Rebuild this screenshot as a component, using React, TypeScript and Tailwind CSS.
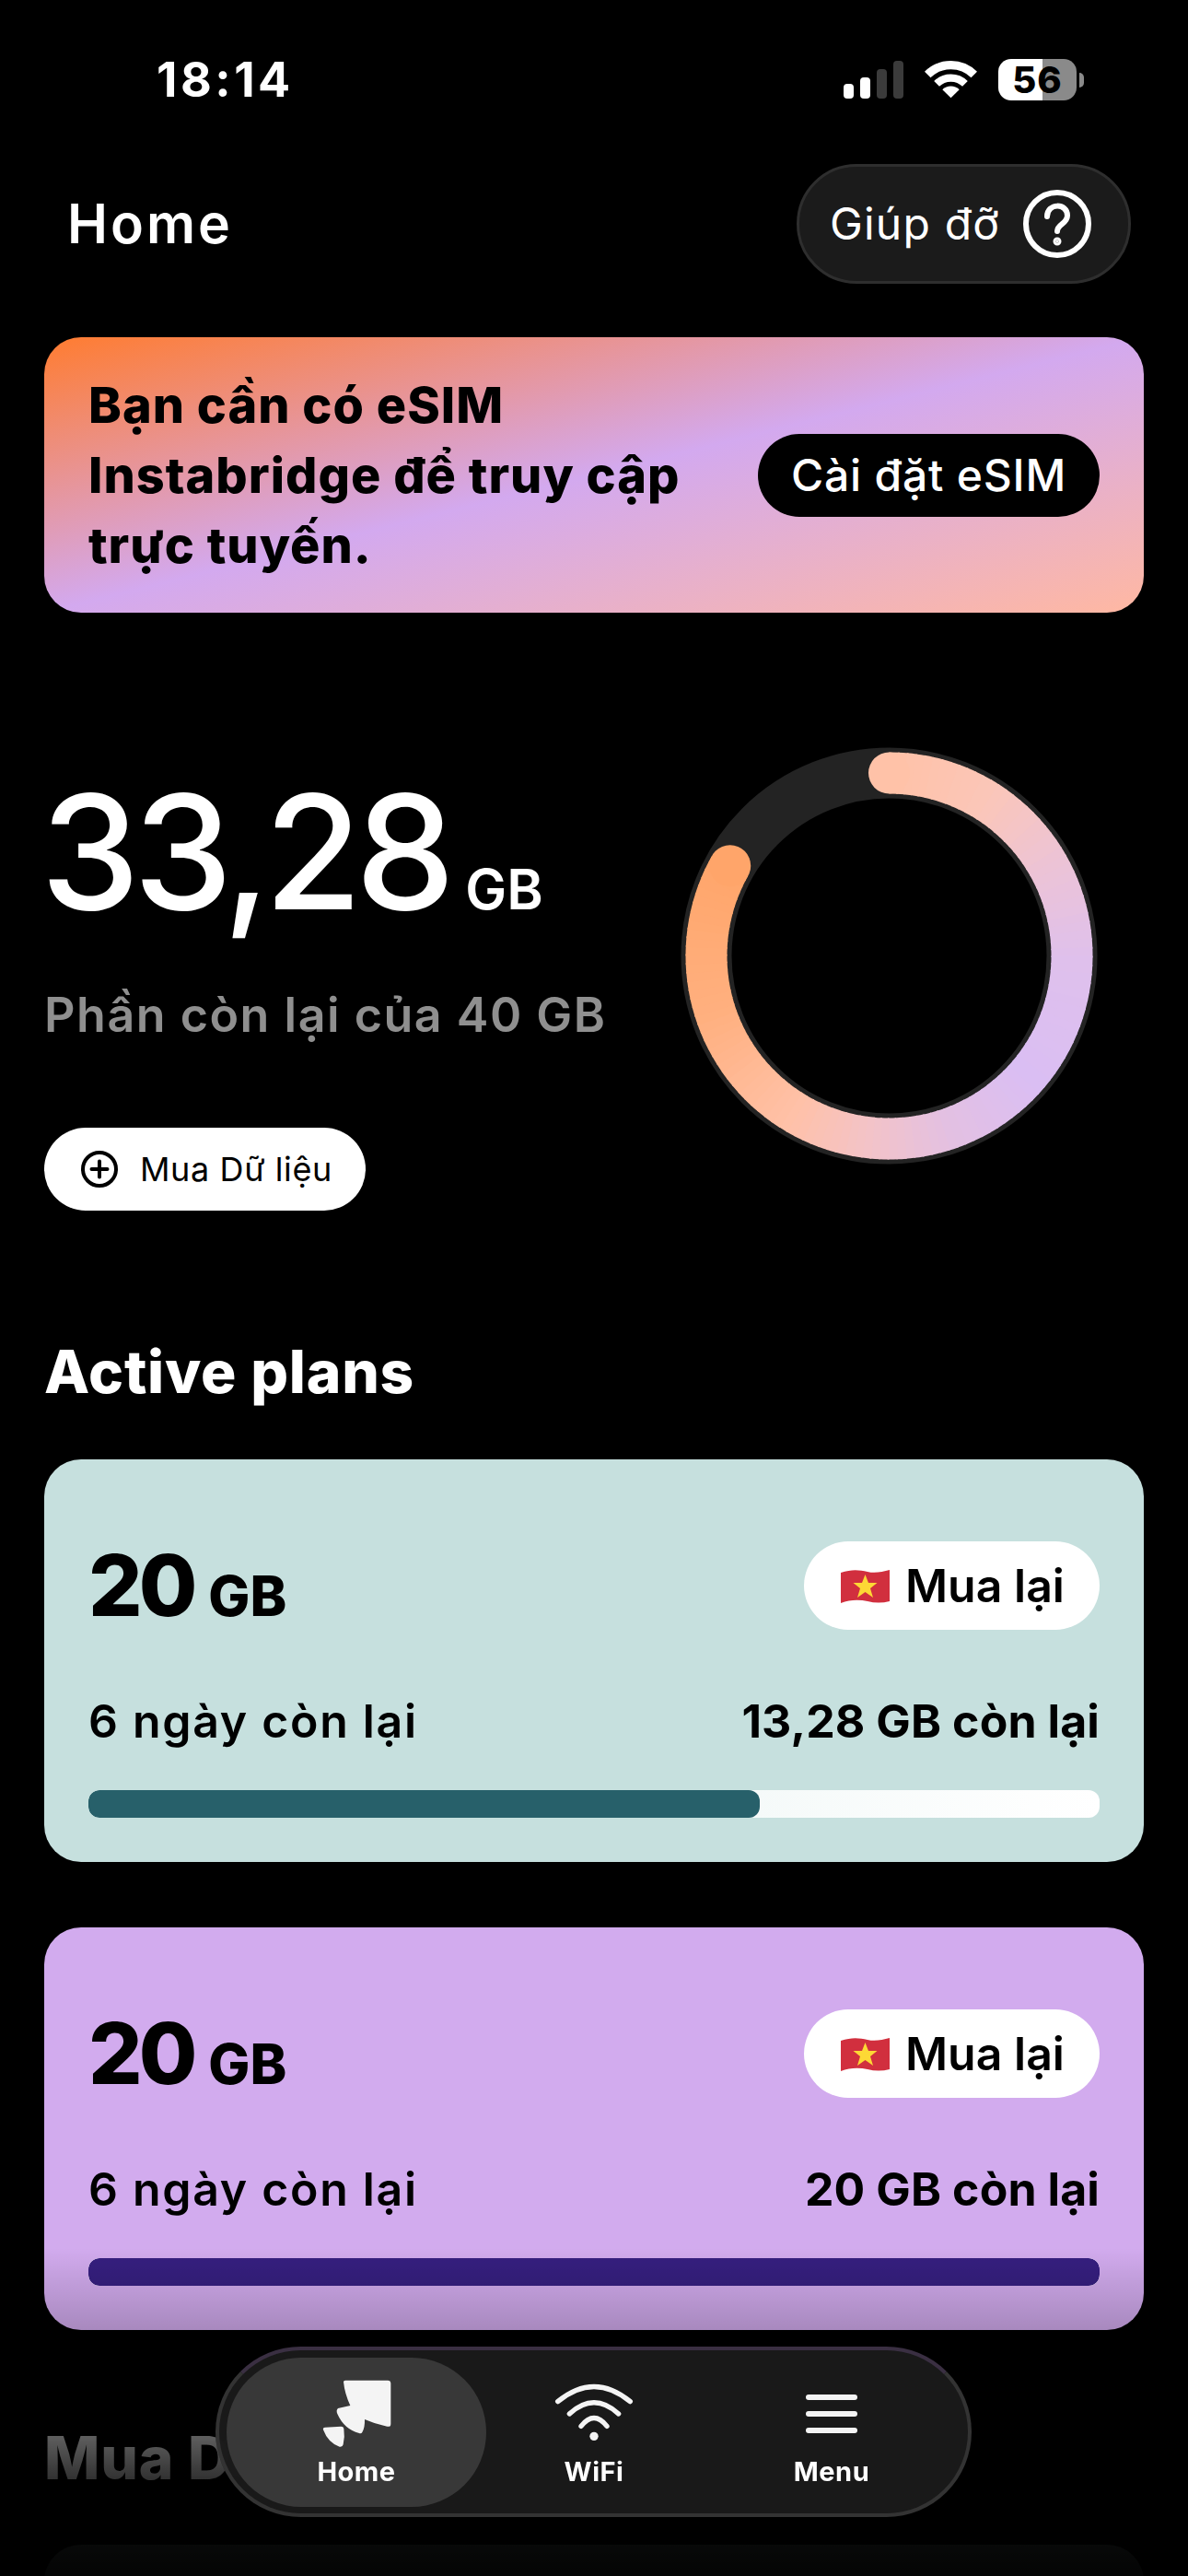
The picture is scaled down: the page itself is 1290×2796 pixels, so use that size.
const GAUGE_STOPS: [number, number[]][] = [
  [0, [255, 194, 168]],
  [30, [251, 198, 184]],
  [60, [236, 195, 214]],
  [90, [223, 192, 236]],
  [130, [218, 190, 243]],
  [160, [227, 192, 226]],
  [185, [243, 195, 200]],
  [210, [255, 193, 168]],
  [250, [255, 176, 127]],
  [300, [255, 165, 106]],
]

function gaugeColor(angle: number) {
  for (let i = 1; i < GAUGE_STOPS.length; i++) {
    const [a0, c0] = GAUGE_STOPS[i - 1]
    const [a1, c1] = GAUGE_STOPS[i]
    if (angle <= a1) {
      const t = (angle - a0) / (a1 - a0)
      const c = c0.map((v, k) => Math.round(v + (c1[k] - v) * t))
      return `rgb(${c[0]},${c[1]},${c[2]})`
    }
  }
  return 'rgb(255,165,106)'
}

function point(angle: number, r = 198.5) {
  const rad = (angle * Math.PI) / 180
  return [226.5 + r * Math.sin(rad), 226.5 - r * Math.cos(rad)]
}

function Gauge() {
  const end = 299.5
  const segments = []
  for (let a = 0; a < end; a += 2.5) {
    const [x0, y0] = point(a)
    const [x1, y1] = point(Math.min(a + 3, end))
    segments.push(
      <path
        key={a}
        d={`M${x0} ${y0} A198.5 198.5 0 0 1 ${x1} ${y1}`}
        fill="none"
        stroke={gaugeColor(a)}
        strokeWidth="45"
      />,
    )
  }
  const [sx, sy] = point(0)
  const [ex, ey] = point(end)
  return (
    <svg width="453" height="453" viewBox="0 0 453 453" className="shrink-0">
      <circle cx="226.5" cy="226.5" r="198.5" fill="none" stroke="#232323" strokeWidth="55" />
      {segments}
      <circle cx={sx} cy={sy} r="22.5" fill={gaugeColor(0)} />
      <circle cx={ex} cy={ey} r="22.5" fill={gaugeColor(end)} />
    </svg>
  )
}

function StatusBar() {
  return (
    <div className="pt-[64px] pl-[170px] pr-[113px] flex items-center justify-between h-[109px]">
      <span className="text-[52px] leading-[45px] font-bold text-white tracking-[3.5px]">18:14</span>
      <div className="flex items-center gap-[23px]">
        <svg width="65" height="41" viewBox="0 0 65 41">
          <rect x="0" y="25" width="11" height="16" rx="4" fill="#fff" />
          <rect x="18" y="18" width="11" height="23" rx="4" fill="#fff" />
          <rect x="36" y="9" width="11" height="32" rx="4" fill="#3b3b3b" />
          <rect x="54" y="0" width="11" height="41" rx="4" fill="#3b3b3b" />
        </svg>
        <svg width="57" height="41" viewBox="-86 -123 172 125">
          <path d="M-77 -77 A109 109 0 0 1 77 -77" fill="none" stroke="#fff" strokeWidth="28" />
          <path d="M-47 -47 A67 67 0 0 1 47 -47" fill="none" stroke="#fff" strokeWidth="25" />
          <path d="M0 0 L-28 -28 A40 40 0 0 1 28 -28 Z" fill="#fff" />
        </svg>
        <div className="flex items-center gap-[3px]">
          <div className="w-[85px] h-[45px] rounded-[14px] bg-[linear-gradient(to_right,#fff_56%,#8a8a8a_56%)] flex items-center justify-center text-black text-[40px] font-extrabold tracking-[1px]">
            56
          </div>
          <div className="w-[5px] h-[16px] rounded-r-full bg-[#8a8a8a]" />
        </div>
      </div>
    </div>
  )
}

function Header() {
  return (
    <div className="mt-[69px] pl-[73px] pr-[62px] flex items-center justify-between">
      <span className="text-[59px] font-semibold text-white tracking-[3px]">Home</span>
      <button className="w-[363px] h-[130px] rounded-full bg-[#1b1b1b] border-[3px] border-[#2e2e2e] flex items-center pl-[33px] gap-[25px]">
        <span className="text-[48px] text-white tracking-[1.2px]">Giúp đỡ</span>
        <svg width="74" height="74" viewBox="0 0 74 74" fill="none" stroke="#fff" strokeWidth="6" strokeLinecap="round">
          <circle cx="37" cy="37" r="34" />
          <path d="M26 29 C26 14 48 14 48 28 C48 37 37 37 37 45" />
          <circle cx="37" cy="56" r="1.5" fill="#fff" />
        </svg>
      </button>
    </div>
  )
}

function Banner() {
  return (
    <div className="mt-[58px] mx-[48px] h-[299px] rounded-[40px] bg-[linear-gradient(to_bottom_right,#ff7c30_0%,#d3a9ef_50%,#ffb8a2_100%)] flex items-center justify-between pl-[48px] pr-[48px]">
      <p className="w-[680px] text-[54px] leading-[76px] font-extrabold text-black tracking-[1px]">
        Bạn cần có eSIM
        <br />
        Instabridge để truy cập
        <br />
        trực tuyến.
      </p>
      <button className="w-[371px] h-[90px] rounded-full bg-black text-white text-[48px] font-medium tracking-[0.8px] flex items-center justify-center">
        Cài đặt eSIM
      </button>
    </div>
  )
}

function Hero() {
  return (
    <div className="mt-[146px] pl-[48px] flex items-start">
      <div className="w-[691px] pt-[27px]">
        <div className="flex items-baseline text-white -ml-[4px]">
          <span className="text-[172px] leading-[172px] font-medium tracking-[-7px]">33,28</span>
          <span className="ml-[18px] text-[60px] leading-[60px] font-semibold">GB</span>
        </div>
        <p className="mt-[61px] text-[52px] leading-[62px] font-semibold text-[#8f8f8f] tracking-[1.5px] whitespace-nowrap">
          Phần còn lại của 40 GB
        </p>
        <button className="mt-[91px] w-[349px] h-[90px] rounded-full bg-white flex items-center pl-[40px] gap-[24px] text-black">
          <svg width="40" height="40" viewBox="0 0 40 40" fill="none" stroke="#000" strokeWidth="4" className="shrink-0">
            <circle cx="20" cy="20" r="18" />
            <path d="M20 11.5V28.5M11.5 20H28.5" strokeLinecap="round" />
          </svg>
          <span className="text-[36px] tracking-[0.6px] whitespace-nowrap">Mua Dữ liệu</span>
        </button>
      </div>
      <Gauge />
    </div>
  )
}

function VietnamFlag() {
  return (
    <svg width="53" height="37" viewBox="0 0 53 37">
      <path d="M0 4 C12 0 20 1 29 3 C37 5 45 3 53 1 V35 C45 37 37 37 29 35 C20 33 10 33 0 37 Z" fill="#d12f3e" />
      <path d="M26.5 6 L30 15 H39.5 L32 21 L35 31 L26.5 25 L18 31 L21 21 L13.5 15 H23 Z" fill="#fdd835" />
    </svg>
  )
}

interface PlanCardProps {
  left: string
  bg: string
  track: string
  fill: string
  percent: number
}

function PlanCard({ left, bg, track, fill, percent }: PlanCardProps) {
  return (
    <div className={`mx-[48px] h-[437px] rounded-[40px] pt-[89px] px-[48px] text-black ${bg}`}>
      <div className="flex items-center justify-between h-[96px]">
        <div className="flex items-baseline font-extrabold">
          <span className="text-[92px] leading-[96px] tracking-[-4px]">20</span>
          <span className="ml-[16px] text-[60px] leading-[60px]">GB</span>
        </div>
        <button className="w-[321px] h-[96px] rounded-full bg-white flex items-center pl-[40px] gap-[17px]">
          <VietnamFlag />
          <span className="text-[50px] font-semibold whitespace-nowrap">Mua lại</span>
        </button>
      </div>
      <div className="mt-[69px] flex items-center justify-between text-[50px] leading-[60px]">
        <span className="font-semibold tracking-[1.7px]">6 ngày còn lại</span>
        <span className="font-bold tracking-[0.1px]">{left}</span>
      </div>
      <div className={`mt-[45px] h-[30px] rounded-[12px] overflow-hidden ${track}`}>
        <div className={`h-full rounded-[12px] ${fill}`} style={{ width: `${percent}%` }} />
      </div>
    </div>
  )
}

function BottomNav() {
  return (
    <div className="absolute left-[234px] top-[2547px] w-[821px] h-[185px] rounded-full bg-[#1a1a1a]/95 backdrop-blur-md border-[4px] border-[#333] border-t-[#3a2f42] z-20">
      <div className="absolute left-[8px] top-[8px] w-[282px] h-[162px] rounded-full bg-[#3c3c3c]/90" />
      <div className="relative ml-[20px] mt-[29px] grid grid-cols-[258px_258px_258px] text-white text-[29px] leading-[36px] font-bold">
        <div className="flex flex-col items-center">
          <svg width="80" height="80" viewBox="350 120 240 240">
            <path
              d="M428 136 Q428 131 434 131 H572 Q582 131 582 141 V272 Q582 284 570 281 Q530 273 497 258 Q498 285 489 300 Q486 305 479 303 Q430 290 408 240 Q403 228 410 222 L450 213 Q432 175 428 136 Z"
              fill="#f4f4f4"
            />
            <path
              d="M362 292 Q360 284 368 284 L420 281 Q428 281 429 288 Q433 315 427 340 Q425 349 415 347 Q378 335 362 292 Z"
              fill="#f4f4f4"
            />
          </svg>
          <span className="mt-[5px] tracking-[0.5px]">Home</span>
        </div>
        <div className="flex flex-col items-center">
          <svg width="90" height="80" viewBox="1110 125 270 240" fill="none" stroke="#f4f4f4" strokeWidth="16" strokeLinecap="round">
            <path d="M1127 205 Q1245 108 1363 205" />
            <path d="M1165 245 Q1245 172 1325 245" />
            <path d="M1203 285 Q1245 232 1287 285" />
            <circle cx="1245" cy="318" r="14" fill="#f4f4f4" stroke="none" />
          </svg>
          <span className="mt-[5px] tracking-[0.5px]">WiFi</span>
        </div>
        <div className="flex flex-col items-center">
          <div className="h-[80px] flex flex-col justify-center gap-[12px]">
            <div className="w-[56px] h-[6px] rounded-full bg-[#f4f4f4]" />
            <div className="w-[56px] h-[6px] rounded-full bg-[#f4f4f4]" />
            <div className="w-[56px] h-[6px] rounded-full bg-[#f4f4f4]" />
          </div>
          <span className="mt-[5px] tracking-[0.5px]">Menu</span>
        </div>
      </div>
    </div>
  )
}

export default function App() {
  return (
    <div className="relative w-[1290px] h-[2796px] overflow-hidden bg-black font-['Inter',sans-serif]">
      <StatusBar />
      <Header />
      <Banner />
      <Hero />

      <h2 className="mt-[135px] mb-[55px] pl-[48px] text-[64px] leading-[80px] font-extrabold text-white tracking-[0.8px]">
        Active plans
      </h2>

      <div className="flex flex-col gap-[71px]">
        <PlanCard
          left="13,28 GB còn lại"
          bg="bg-[#c6e0de]"
          track="bg-[linear-gradient(to_right,#e2f0ee,#ffffff)]"
          fill="bg-[#27606a]"
          percent={66.4}
        />
        <PlanCard
          left="20 GB còn lại"
          bg="bg-[#d2abee]"
          track="bg-white"
          fill="bg-[#361f80]"
          percent={100}
        />
      </div>

      <h2 className="mt-[99px] pl-[48px] text-[64px] leading-[80px] font-extrabold text-white tracking-[0.8px]">
        Mua Dữ liệu
      </h2>
      <div className="mt-[54px] mx-[48px] h-[200px] rounded-[40px] bg-[#c6e0de]" />

      {/* fade towards the tab bar */}
      <div className="absolute left-0 right-0 top-[2440px] bottom-0 bg-[linear-gradient(to_bottom,rgba(0,0,0,0)_0%,rgba(0,0,0,0.2)_25%,rgba(0,0,0,0.8)_70%,rgba(0,0,0,0.96)_90%,rgba(0,0,0,0.98)_100%)]" />

      <BottomNav />
    </div>
  )
}
